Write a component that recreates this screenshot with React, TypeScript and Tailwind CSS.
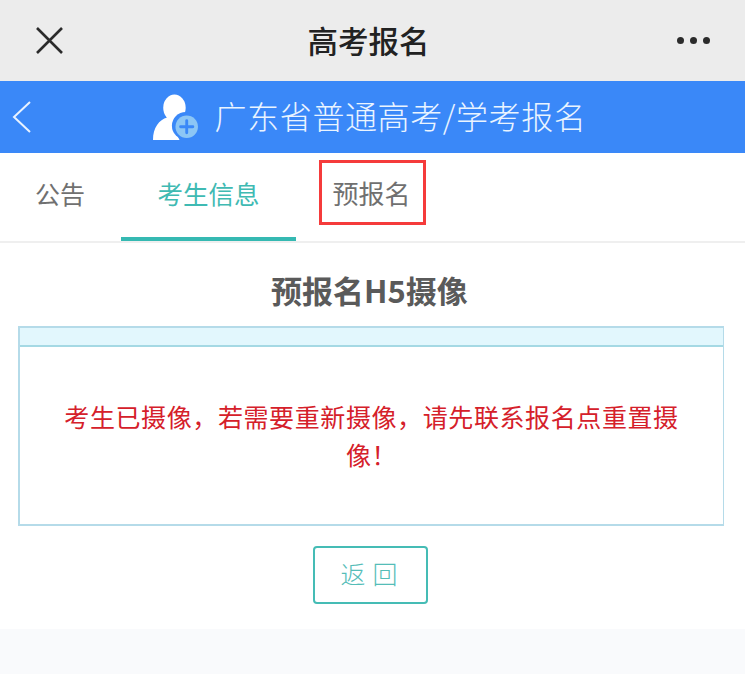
const font = { fontFamily: '"Noto Sans CJK SC", "Liberation Sans", sans-serif' };

function UserPlusIcon() {
  return (
    <svg width="47" height="47" viewBox="0 0 46 46" className="shrink-0">
      <ellipse cx="21" cy="13.5" rx="11" ry="13" fill="#fff" />
      <path d="M0 45 C0 33 6 25 14 23 L28 23 C24 30 22 39 26 45 Z" fill="#fff" />
      <circle cx="32" cy="31" r="13.5" fill="#3a88f8" />
      <circle cx="33" cy="32" r="11" fill="#8cc6f5" />
      <path d="M33 26 V38 M27 32 H39" stroke="#3a88f8" strokeWidth="2.8" strokeLinecap="round" />
    </svg>
  );
}

export default function App() {
  return (
    <div className="flex h-[674px] w-[745px] flex-col overflow-hidden bg-white" style={font}>
      <div className="flex h-[81px] shrink-0 items-center justify-between bg-[#ececec] pl-[36px] pr-[35px]">
        <svg width="27" height="27" viewBox="0 0 27 27">
          <path d="M1 1 L26 26 M26 1 L1 26" stroke="#2b2b2b" strokeWidth="2.6" />
        </svg>
        <div className="ml-[-3px] text-[30.5px] font-medium leading-none text-[#222]">高考报名</div>
        <div className="flex gap-[6px]">
          <span className="h-[7px] w-[7px] rounded-full bg-[#2b2b2b]" />
          <span className="h-[7px] w-[7px] rounded-full bg-[#2b2b2b]" />
          <span className="h-[7px] w-[7px] rounded-full bg-[#2b2b2b]" />
        </div>
      </div>

      <div className="relative flex h-[72px] shrink-0 items-center justify-center gap-[15px] bg-[#3a88f8] pr-[6px]">
        <svg width="20" height="32" viewBox="0 0 20 32" className="absolute left-[12px] top-[20px]">
          <path d="M18 1 L2 16 L18 31" fill="none" stroke="#e8f2ff" strokeWidth="2" />
        </svg>
        <UserPlusIcon />
        <div className="mb-[5px] text-[32px] font-light leading-none tracking-[0.6px] text-[#eaf4ff]">广东省普通高考/学考报名</div>
      </div>

      <div className="flex h-[90px] shrink-0 border-b-2 border-[#efefef] bg-white">
        <div className="flex w-[121px] items-center pb-[7px] pl-[35px] text-[25px] text-[#707070]">公告</div>
        <div className="flex h-[88px] w-[175px] items-center justify-center border-b-[4px] border-[#35b9b2] pb-[4px] text-[25.5px] text-[#3fbab3]">
          考生信息
        </div>
        <div className="ml-[23px] mt-[7px] flex h-[65px] w-[107px] items-center justify-center border-[3px] border-[#f53b3b] pr-[2px] text-[26px] text-[#707070]">
          预报名
        </div>
      </div>

      <div className="flex flex-1 flex-col items-center pr-[3px]">
        <h1 className="ml-[-3px] mt-[26px] h-[42px] text-[31px] font-bold leading-[42px] text-[#5a5a5a]">预报名H5摄像</h1>
        <div className="mt-[15px] w-[706px] border-2 border-r border-[#b5dbe9]">
          <div className="h-[19px] border-b-2 border-[#a5d9e4] bg-[#e2f7fd]" />
          <div className="flex h-[177px] items-center justify-center px-[38px] pb-[1px] text-center text-[25px] leading-[38px] tracking-[0.6px] text-[#d5202a]">
            考生已摄像，若需要重新摄像，请先联系报名点重置摄像！
          </div>
        </div>
        <button
          type="button"
          className="ml-[-2px] mt-[20px] flex h-[58px] w-[115px] items-center justify-center rounded-[4px] border-2 border-[#45bcb5] pb-[2px] pl-[5px] text-[25px] font-light tracking-[7px] text-[#55bdb8]"
        >
          返回
        </button>
      </div>

      <div className="h-[45px] shrink-0 bg-[#f9fafc]" />
    </div>
  );
}
